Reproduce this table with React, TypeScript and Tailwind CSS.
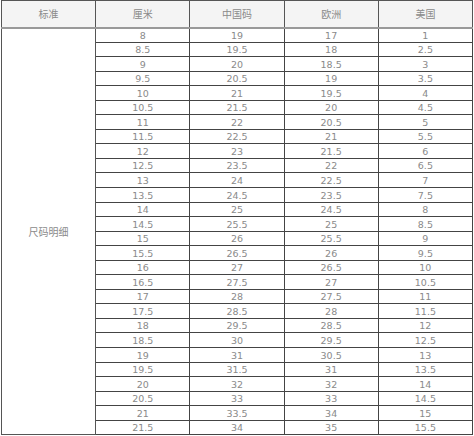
const sizes = [
  ["8", "19", "17", "1"],
  ["8.5", "19.5", "18", "2.5"],
  ["9", "20", "18.5", "3"],
  ["9.5", "20.5", "19", "3.5"],
  ["10", "21", "19.5", "4"],
  ["10.5", "21.5", "20", "4.5"],
  ["11", "22", "20.5", "5"],
  ["11.5", "22.5", "21", "5.5"],
  ["12", "23", "21.5", "6"],
  ["12.5", "23.5", "22", "6.5"],
  ["13", "24", "22.5", "7"],
  ["13.5", "24.5", "23.5", "7.5"],
  ["14", "25", "24.5", "8"],
  ["14.5", "25.5", "25", "8.5"],
  ["15", "26", "25.5", "9"],
  ["15.5", "26.5", "26", "9.5"],
  ["16", "27", "26.5", "10"],
  ["16.5", "27.5", "27", "10.5"],
  ["17", "28", "27.5", "11"],
  ["17.5", "28.5", "28", "11.5"],
  ["18", "29.5", "28.5", "12"],
  ["18.5", "30", "29.5", "12.5"],
  ["19", "31", "30.5", "13"],
  ["19.5", "31.5", "31", "13.5"],
  ["20", "32", "32", "14"],
  ["20.5", "33", "33", "14.5"],
  ["21", "33.5", "34", "15"],
  ["21.5", "34", "35", "15.5"],
]

const headers = ["标准", "厘米", "中国码", "欧洲", "美国"]

export default function App() {
  return (
    <div className="w-[474px] h-[436px] bg-white pl-[1px] font-['DejaVu_Sans','Noto_Sans_CJK_SC',sans-serif] text-[9.5px] text-[#8a8a8a]">
      <table className="w-[472px] table-fixed border-collapse border border-[#777]">
        <thead>
          <tr className="h-[27px] bg-[#f4f4f4]">
            {headers.map((h) => (
              <th
                key={h}
                className="border border-[#555] border-b-2 border-b-[#999] p-0 text-center font-normal font-['Noto_Sans_CJK_SC',sans-serif] text-[10px] text-[#8a8a8a]"
              >
                {h}
              </th>
            ))}
          </tr>
        </thead>
        <tbody>
          {sizes.map((row, i) => (
            <tr key={row[0]} className="h-[14.55px]">
              {i === 0 && (
                <td
                  rowSpan={sizes.length}
                  className="border border-[#555] bg-white p-0 text-center font-['Noto_Sans_CJK_SC',sans-serif] text-[10px] text-[#8a8a8a]"
                >
                  尺码明细
                </td>
              )}
              {row.map((v, j) => (
                <td key={j} className="border border-[#444] p-0 pt-[1px] text-center leading-none">
                  {v}
                </td>
              ))}
            </tr>
          ))}
        </tbody>
      </table>
    </div>
  )
}
